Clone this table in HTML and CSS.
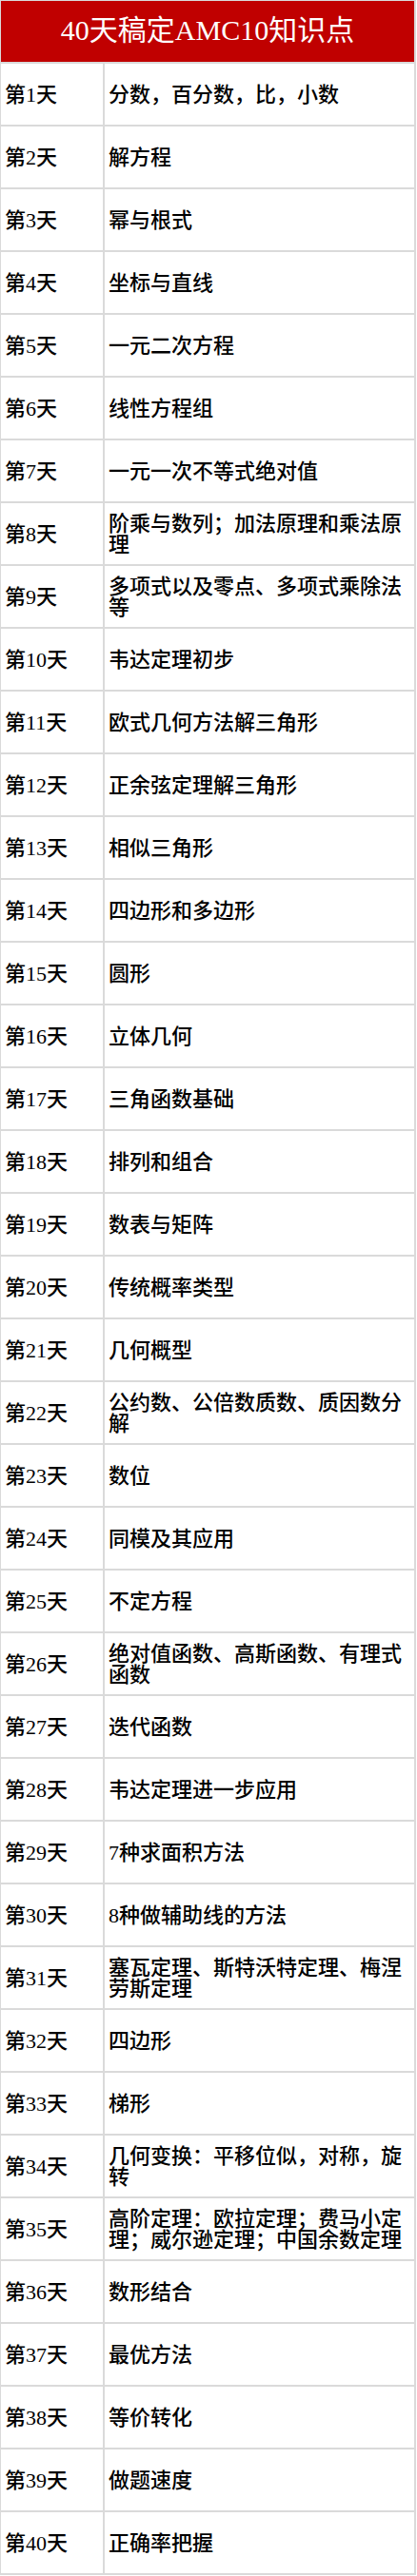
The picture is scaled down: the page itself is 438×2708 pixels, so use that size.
FILE: index.html
```html
<!DOCTYPE html>
<html lang="zh-CN">
<head>
<meta charset="utf-8">
<title>40天稿定AMC10知识点</title>
<link rel="stylesheet" href="styles.css">
</head>
<body>
<div class="sheet">
  <div class="title">40天稿定AMC10知识点</div>
  <div class="day">第1天</div><div class="topic">分数，百分数，比，小数</div>
  <div class="day">第2天</div><div class="topic">解方程</div>
  <div class="day">第3天</div><div class="topic">幂与根式</div>
  <div class="day">第4天</div><div class="topic">坐标与直线</div>
  <div class="day">第5天</div><div class="topic">一元二次方程</div>
  <div class="day">第6天</div><div class="topic">线性方程组</div>
  <div class="day">第7天</div><div class="topic">一元一次不等式绝对值</div>
  <div class="day">第8天</div><div class="topic">阶乘与数列；加法原理和乘法原理</div>
  <div class="day">第9天</div><div class="topic">多项式以及零点、多项式乘除法等</div>
  <div class="day">第10天</div><div class="topic">韦达定理初步</div>
  <div class="day">第11天</div><div class="topic">欧式几何方法解三角形</div>
  <div class="day">第12天</div><div class="topic">正余弦定理解三角形</div>
  <div class="day">第13天</div><div class="topic">相似三角形</div>
  <div class="day">第14天</div><div class="topic">四边形和多边形</div>
  <div class="day">第15天</div><div class="topic">圆形</div>
  <div class="day">第16天</div><div class="topic">立体几何</div>
  <div class="day">第17天</div><div class="topic">三角函数基础</div>
  <div class="day">第18天</div><div class="topic">排列和组合</div>
  <div class="day">第19天</div><div class="topic">数表与矩阵</div>
  <div class="day">第20天</div><div class="topic">传统概率类型</div>
  <div class="day">第21天</div><div class="topic">几何概型</div>
  <div class="day">第22天</div><div class="topic">公约数、公倍数质数、质因数分解</div>
  <div class="day">第23天</div><div class="topic">数位</div>
  <div class="day">第24天</div><div class="topic">同模及其应用</div>
  <div class="day">第25天</div><div class="topic">不定方程</div>
  <div class="day">第26天</div><div class="topic">绝对值函数、高斯函数、有理式函数</div>
  <div class="day">第27天</div><div class="topic">迭代函数</div>
  <div class="day">第28天</div><div class="topic">韦达定理进一步应用</div>
  <div class="day">第29天</div><div class="topic">7种求面积方法</div>
  <div class="day">第30天</div><div class="topic">8种做辅助线的方法</div>
  <div class="day">第31天</div><div class="topic">塞瓦定理、斯特沃特定理、梅涅劳斯定理</div>
  <div class="day">第32天</div><div class="topic">四边形</div>
  <div class="day">第33天</div><div class="topic">梯形</div>
  <div class="day">第34天</div><div class="topic">几何变换：平移位似，对称，旋转</div>
  <div class="day">第35天</div><div class="topic">高阶定理：欧拉定理；费马小定理；威尔逊定理；中国余数定理</div>
  <div class="day">第36天</div><div class="topic">数形结合</div>
  <div class="day">第37天</div><div class="topic">最优方法</div>
  <div class="day">第38天</div><div class="topic">等价转化</div>
  <div class="day">第39天</div><div class="topic">做题速度</div>
  <div class="day">第40天</div><div class="topic">正确率把握</div>
</div>
</body>
</html>
```
FILE: styles.css
```css
html, body {
  margin: 0;
  padding: 0;
  background: #ffffff;
}

body {
  font-family: "Liberation Serif", "Noto Sans CJK SC", serif;
  color: #000000;
}

.sheet {
  display: grid;
  grid-template-columns: 109px 327px;
  width: 438px;
  box-sizing: border-box;
  margin: -1px 0 0 -1px;
  border-top: 2px solid #dadada;
  border-left: 2px solid #dadada;
}

.title,
.day,
.topic {
  box-sizing: border-box;
  border-right: 2px solid #dadada;
  border-bottom: 2px solid #dadada;
  height: 66px;
  display: flex;
  align-items: center;
}

.title {
  grid-column: 1 / span 2;
  justify-content: center;
  background: #c00000;
  color: #ffffff;
  font-size: 30px;
  line-height: 30px;
  padding-bottom: 2px;
}

.day,
.topic {
  font-size: 22px;
  line-height: 22px;
  font-weight: 500;
  padding: 2px 4px 0 4px;
}
```
